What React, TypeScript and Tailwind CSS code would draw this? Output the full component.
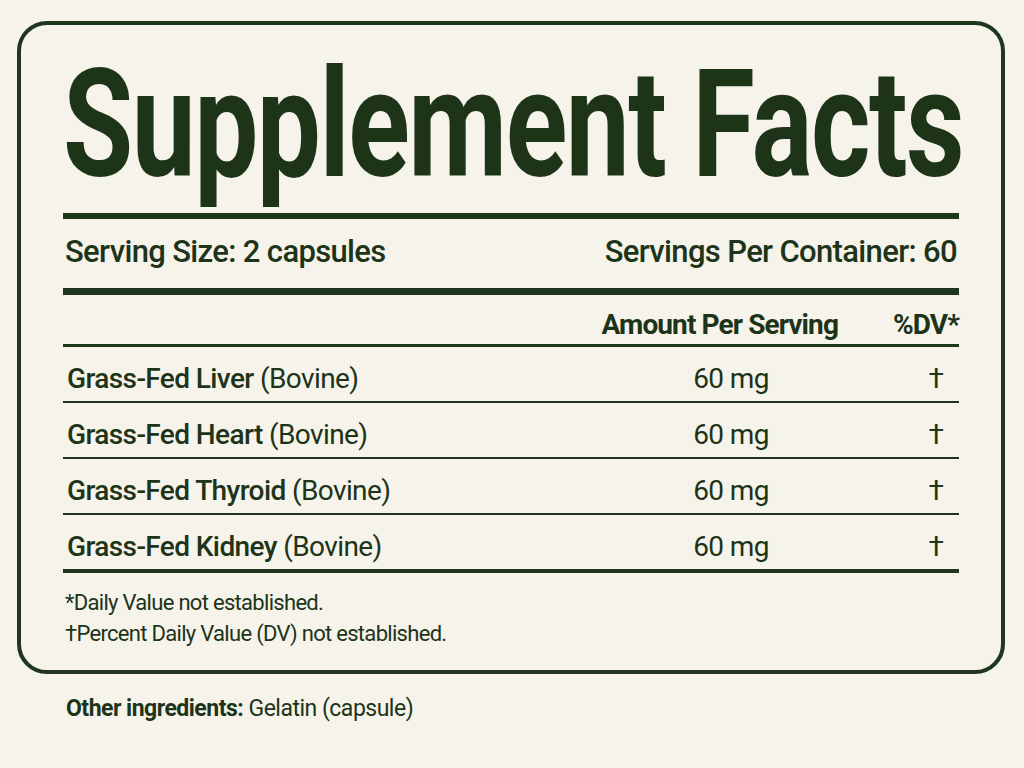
const ink = "text-[#1d3419]";

const rows = [
  { name: "Grass-Fed Liver", amount: "60 mg" },
  { name: "Grass-Fed Heart", amount: "60 mg" },
  { name: "Grass-Fed Thyroid", amount: "60 mg" },
  { name: "Grass-Fed Kidney", amount: "60 mg" },
];

export default function App() {
  return (
    <div
      className={`min-h-[768px] w-[1024px] overflow-hidden bg-[#f6f3eb] pt-[21px] pl-[17px] ${ink}`}
      style={{ fontFamily: 'Roboto, "Liberation Sans", sans-serif' }}
    >
      {/* label box */}
      <div className="w-[988px] rounded-[30px] border-4 border-[#1f361d] px-[42px] pt-[25px] pb-[21px]">
        <div className="h-[150px] whitespace-nowrap">
          <span className="inline-block origin-left scale-x-[0.761] text-[150px] leading-[150px] font-bold tracking-[-2px]">
            Supplement Facts
          </span>
        </div>

        <div className="mt-[13px] h-[6px] bg-[#1f361d]" />

        <div className="mt-[13px] flex h-[40px] items-center justify-between px-[2px] text-[31px] leading-[40px] font-medium tracking-[-0.65px]">
          <span>Serving Size: 2 capsules</span>
          <span>Servings Per Container: 60</span>
        </div>

        <div className="mt-[16px] h-[7px] bg-[#1f361d]" />

        {/* column heads */}
        <div className="mt-[12px] flex h-[40px] justify-end border-b-[3px] border-[#1f361d] text-[28px] leading-[36px] font-bold tracking-[-0.9px]">
          <span>Amount Per Serving</span>
          <span className="w-[121px] text-right">%DV*</span>
        </div>

        {rows.map((row, i) => (
          <div
            key={row.name}
            className={`flex h-[56px] pt-[15px] pl-[4px] text-[28px] leading-[34px] tracking-[-0.6px] ${
              i === rows.length - 1 ? "h-[58px] border-b-4" : "border-b-2"
            } border-[#1f361d]`}
          >
            <span className="flex-1">
              <span className="font-medium">{row.name}</span> (Bovine)
            </span>
            <span className="w-[364px] text-center">{row.amount}</span>
            <span className="w-[46px] text-center">†</span>
          </div>
        ))}

        <div className="mt-[14px] pl-[2px] text-[22px] leading-[31px] tracking-[-0.7px]">
          <p>*Daily Value not established.</p>
          <p>†Percent Daily Value (DV) not established.</p>
        </div>
      </div>

      <p className="mt-[19px] pl-[49px] text-[23px] leading-[31px] tracking-[-0.5px]">
        <span className="font-bold">Other ingredients:</span> Gelatin (capsule)
      </p>
    </div>
  );
}
